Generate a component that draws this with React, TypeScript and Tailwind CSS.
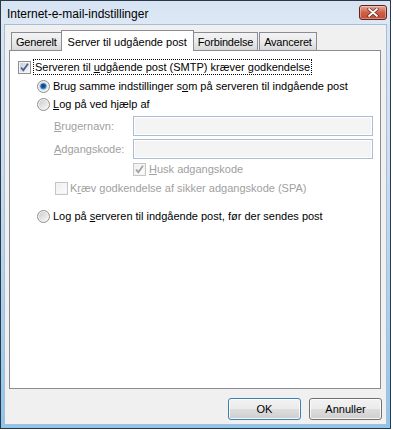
import React from "react";

const FONT = { fontFamily: '"Liberation Sans", Arial, sans-serif' };

function Checkbox({ checked, disabled }: { checked?: boolean; disabled?: boolean }) {
  const border = disabled ? "#c5c5c5" : "#8e8f8f";
  const check = disabled ? "#a3a3a3" : "#4a5f97";
  return (
    <svg width="13" height="13" viewBox="0 0 13 13" className="shrink-0">
      <defs>
        <linearGradient id={disabled ? "cbd" : "cbn"} x1="0" y1="0" x2="1" y2="1">
          <stop offset="0" stopColor={disabled ? "#f0f0f0" : "#cbcfd5"} />
          <stop offset="1" stopColor={disabled ? "#fbfbfb" : "#f6f6f6"} />
        </linearGradient>
      </defs>
      <rect x="0.5" y="0.5" width="12" height="12" fill="#f4f4f4" stroke={border} />
      <rect x="2" y="2" width="9" height="9" fill={`url(#${disabled ? "cbd" : "cbn"})`} />
      {checked && (
        <path d="M3 6.5 L5.3 9.2 L10 2.8" fill="none" stroke={check} strokeWidth="1.8" strokeLinejoin="miter" />
      )}
    </svg>
  );
}

function Radio({ checked }: { checked?: boolean }) {
  return (
    <svg width="13" height="13" viewBox="0 0 13 13" className="shrink-0">
      <defs>
        <linearGradient id="rb" x1="0" y1="0" x2="1" y2="1">
          <stop offset="0" stopColor="#c9ccd1" />
          <stop offset="1" stopColor="#f7f7f7" />
        </linearGradient>
        <radialGradient id="rd" cx="0.45" cy="0.4" r="0.6">
          <stop offset="0" stopColor="#0d3f7a" />
          <stop offset="0.55" stopColor="#1d5da5" />
          <stop offset="1" stopColor="#8ec4ee" />
        </radialGradient>
      </defs>
      <circle cx="6.5" cy="6.5" r="6" fill="#f3f3f3" stroke="#8d8d8d" />
      <circle cx="6.5" cy="6.5" r="4.5" fill="url(#rb)" />
      {checked && <circle cx="6.5" cy="6.5" r="3.3" fill="url(#rd)" />}
    </svg>
  );
}

function CloseButton() {
  return (
    <div className="w-[28px] h-[15px] rounded-[3px] border border-[#5b241c] bg-gradient-to-b from-[#e7a898] via-[#cf5f48] to-[#c24a34] flex items-center justify-center shadow-[inset_0_0_0_1px_rgba(255,255,255,0.35)]">
      <svg width="12" height="9" viewBox="0 0 12 9">
        <path d="M2 1 L10 8 M10 1 L2 8" stroke="#5a2a24" strokeWidth="3.2" strokeLinecap="round" />
        <path d="M2 1 L10 8 M10 1 L2 8" stroke="#ffffff" strokeWidth="1.8" strokeLinecap="round" />
      </svg>
    </div>
  );
}

function Tab({ label, selected }: { label: string; selected?: boolean }) {
  if (selected) {
    return (
      <div className="relative z-10 h-[21px] -mb-px bg-white border border-b-0 border-[#898c95] px-[6px] flex items-start pt-[3px] text-[11px] text-black -mx-px">
        {label}
      </div>
    );
  }
  return (
    <div className="h-[18px] bg-gradient-to-b from-[#f3f3f3] via-[#ebebeb] to-[#d8d8d8] border border-b-0 border-[#898c95] px-[4px] flex items-center pt-[1px] text-[11px] text-black tracking-[-0.2px]">
      {label}
    </div>
  );
}

function Btn({ label, def }: { label: string; def?: boolean }) {
  return (
    <div
      className={
        "w-[73px] h-[22px] rounded-[3px] border flex items-center justify-center text-[11px] text-black bg-[linear-gradient(to_bottom,#f2f2f2_0%,#ebebeb_50%,#dddddd_51%,#cfcfcf_100%)] shadow-[inset_0_0_0_1px_rgba(255,255,255,0.8)] " +
        (def ? "border-[#3c7fb1]" : "border-[#707070]")
      }
    >
      {label}
    </div>
  );
}

export default function App() {
  return (
    <div className="w-[393px] h-[430px] bg-white" style={FONT}>
      <div className="w-[391px] h-[429px] border border-[#2b3947] bg-[linear-gradient(to_bottom,#d9e6f4_0%,#c9dcf0_40%,#8cc6ec_100%)] flex flex-col">
        {/* title bar */}
        <div className="h-[23px] flex items-start justify-between pl-[6px] pr-[3px] bg-[linear-gradient(to_bottom,#d6e3f2,#dde8f5)]">
          <div className="pt-[5px] text-[12px] text-black leading-[16px]">Internet-e-mail-indstillinger</div>
          <div className="pt-[4px]">
            <CloseButton />
          </div>
        </div>
        {/* client */}
        <div className="flex-1 mx-[3px] mb-[3px] border border-[#a9bed6] bg-[#f0f0f0] flex flex-col">
          <div className="pl-[4px] pt-[5px]">
            {/* tab strip */}
            <div className="flex items-end pl-[2px] h-[20px]">
              <Tab label="Generelt" />
              <Tab label="Server til udgående post" selected />
              <Tab label="Forbindelse" />
              <div className="ml-px">
                <Tab label="Avanceret" />
              </div>
            </div>
            {/* panel */}
            <div className="w-[372px] h-[339px] bg-white border border-[#898c95] text-[11px] text-black">
              <div className="pl-[8px] pt-[8px] flex flex-col">
                <div className="h-[16px] flex items-center">
                  <Checkbox checked />
                  <div className="ml-[2px] border border-dotted border-black px-[1px] h-[16px] flex items-center whitespace-pre">
                    {"Serveren til "}
                    <u>u</u>
                    {"dgående post (SMTP) kræver godkendelse"}
                  </div>
                </div>
                <div className="h-[22px] flex items-center pl-[19px]">
                  <Radio checked />
                  <span className="ml-[3px] whitespace-pre">
                    {"Brug samme indstillinger s"}
                    <u>o</u>
                    {"m på serveren til indgående post"}
                  </span>
                </div>
                <div className="h-[14px] flex items-center pl-[19px]">
                  <Radio />
                  <span className="ml-[3px] whitespace-pre">
                    <u>L</u>
                    {"og på ved hjælp af"}
                  </span>
                </div>
                <div className="mt-[5px] h-[20px] flex items-center pl-[36px] text-[#a0a0a0]">
                  <span className="w-[79px]">
                    <u>B</u>rugernavn:
                  </span>
                  <div className="w-[240px] h-[20px] border border-[#abbdd3] bg-[#f4f4f4] shadow-[inset_0_0_0_1px_#ffffff]" />
                </div>
                <div className="mt-[3px] h-[20px] flex items-center pl-[36px] text-[#a0a0a0]">
                  <span className="w-[79px]">
                    <u>A</u>dgangskode:
                  </span>
                  <div className="w-[240px] h-[20px] border border-[#abbdd3] bg-[#f4f4f4] shadow-[inset_0_0_0_1px_#ffffff]" />
                </div>
                <div className="mt-[4px] h-[13px] flex items-center pl-[115px] text-[#a0a0a0]">
                  <Checkbox checked disabled />
                  <span className="ml-[3px] whitespace-pre">
                    <u>H</u>
                    {"usk adgangskode"}
                  </span>
                </div>
                <div className="mt-[6px] h-[13px] flex items-center pl-[37px] text-[#a0a0a0]">
                  <Checkbox disabled />
                  <span className="ml-[2px] whitespace-pre">
                    {"K"}
                    <u>r</u>
                    {"æv godkendelse af sikker adgangskode (SPA)"}
                  </span>
                </div>
                <div className="mt-[15px] h-[13px] flex items-center pl-[19px]">
                  <Radio />
                  <span className="ml-[3px] whitespace-pre">
                    {"Log på "}
                    <u>s</u>
                    {"erveren til indgående post, før der sendes post"}
                  </span>
                </div>
              </div>
            </div>
          </div>
          <div className="mt-[9px] flex justify-end gap-[8px] pr-[4px]">
            <Btn label="OK" def />
            <Btn label="Annuller" />
          </div>
        </div>
      </div>
    </div>
  );
}
